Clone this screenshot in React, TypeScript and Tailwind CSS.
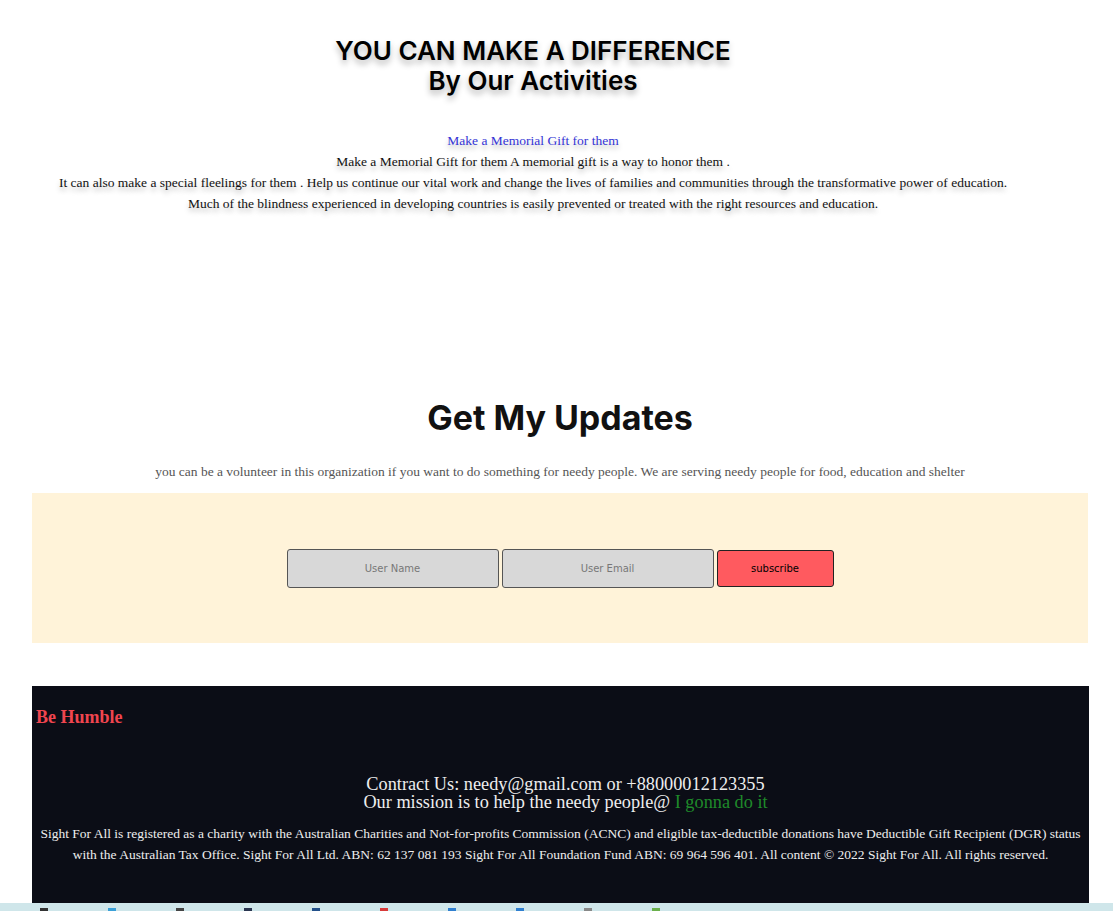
export default function App() {
  const serif = { fontFamily: '"Liberation Serif", "Times New Roman", serif' };
  return (
    <div className="w-[1113px] h-[911px] bg-white overflow-hidden flex flex-col" style={serif}>
      <section className="w-[1066px] flex flex-col items-center pt-[36px]">
        <h1
          className="text-[26px] leading-[30px] font-semibold text-black text-center font-['Inter',sans-serif] [text-shadow:0_4px_6px_rgba(0,0,0,0.3)]"
        >
          YOU CAN MAKE A DIFFERENCE
          <br />
          By Our Activities
        </h1>
        <div className="mt-[34px] text-center text-[13.5px] leading-[21px] text-[#111] [text-shadow:0_4px_5px_rgba(0,0,0,0.25)]">
          <p className="text-[#3434d6]">Make a Memorial Gift for them</p>
          <p>Make a Memorial Gift for them A memorial gift is a way to honor them .</p>
          <p>
            It can also make a special fleelings for them . Help us continue our vital work and change the lives of
            families and communities through the transformative power of education.
          </p>
          <p>Much of the blindness experienced in developing countries is easily prevented or treated with the right resources and education.</p>
        </div>
      </section>

      <section className="ml-[32px] w-[1056px] mt-[183px] flex flex-col items-center">
        <h2 className="text-[34px] leading-[42px] font-bold text-[#111] font-['Inter',sans-serif]">Get My Updates</h2>
        <p className="mt-[22px] text-[13.5px] leading-[21px] text-[#555]">
          you can be a volunteer in this organization if you want to do something for needy people. We are serving needy
          people for food, education and shelter
        </p>
        <div className="mt-[11px] w-full h-[150px] bg-[#fff3d9] flex items-center justify-center gap-[3px]">
          <input
            placeholder="User Name"
            className="w-[212px] h-[39px] bg-[#d8d8d8] border border-[#555] rounded-[3px] text-center text-[10px] placeholder:text-[#777] font-['DejaVu_Sans',sans-serif]"
          />
          <input
            placeholder="User Email"
            className="w-[212px] h-[39px] bg-[#d8d8d8] border border-[#555] rounded-[3px] text-center text-[10px] placeholder:text-[#777] font-['DejaVu_Sans',sans-serif]"
          />
          <button className="w-[117px] h-[37px] bg-[#ff5a5f] border border-[#222] rounded-[3px] text-[10px] text-black font-['DejaVu_Sans',sans-serif]">
            subscribe
          </button>
        </div>
      </section>

      <footer className="ml-[32px] w-[1057px] h-[217px] mt-[43px] bg-[#0b0d16] text-white flex flex-col">
        <h3 className="mt-[21px] ml-[4px] text-[18px] leading-[20px] font-bold text-[#f0454f]">Be Humble</h3>
        <div className="mt-[48px] pl-[10px] text-center text-[18.3px] leading-[18px] text-[#eee]">
          <p>Contract Us: needy@gmail.com or +88000012123355</p>
          <p>
            Our mission is to help the needy people@ <span className="text-[#1f8a2a]">I gonna do it</span>
          </p>
        </div>
        <p className="mt-[12px] px-[4px] text-center text-[13.5px] leading-[21px] text-[#eee]">
          Sight For All is registered as a charity with the Australian Charities and Not-for-profits Commission (ACNC) and
          eligible tax-deductible donations have Deductible Gift Recipient (DGR) status with the Australian Tax Office.
          Sight For All Ltd. ABN: 62 137 081 193 Sight For All Foundation Fund ABN: 69 964 596 401. All content © 2022
          Sight For All. All rights reserved.
        </p>
      </footer>

      <div className="h-[8px] w-full bg-[#cfe6ea] flex items-end gap-[60px] pl-[40px]">
        <span className="w-[8px] h-[3px] bg-[#333]" />
        <span className="w-[8px] h-[3px] bg-[#3aa0d8]" />
        <span className="w-[8px] h-[3px] bg-[#444]" />
        <span className="w-[8px] h-[3px] bg-[#2a3550]" />
        <span className="w-[8px] h-[3px] bg-[#22508a]" />
        <span className="w-[8px] h-[3px] bg-[#d83a3a]" />
        <span className="w-[8px] h-[3px] bg-[#2f7fd0]" />
        <span className="w-[8px] h-[3px] bg-[#2f7fd0]" />
        <span className="w-[8px] h-[3px] bg-[#888]" />
        <span className="w-[8px] h-[3px] bg-[#6ab04c]" />
      </div>
    </div>
  );
}
